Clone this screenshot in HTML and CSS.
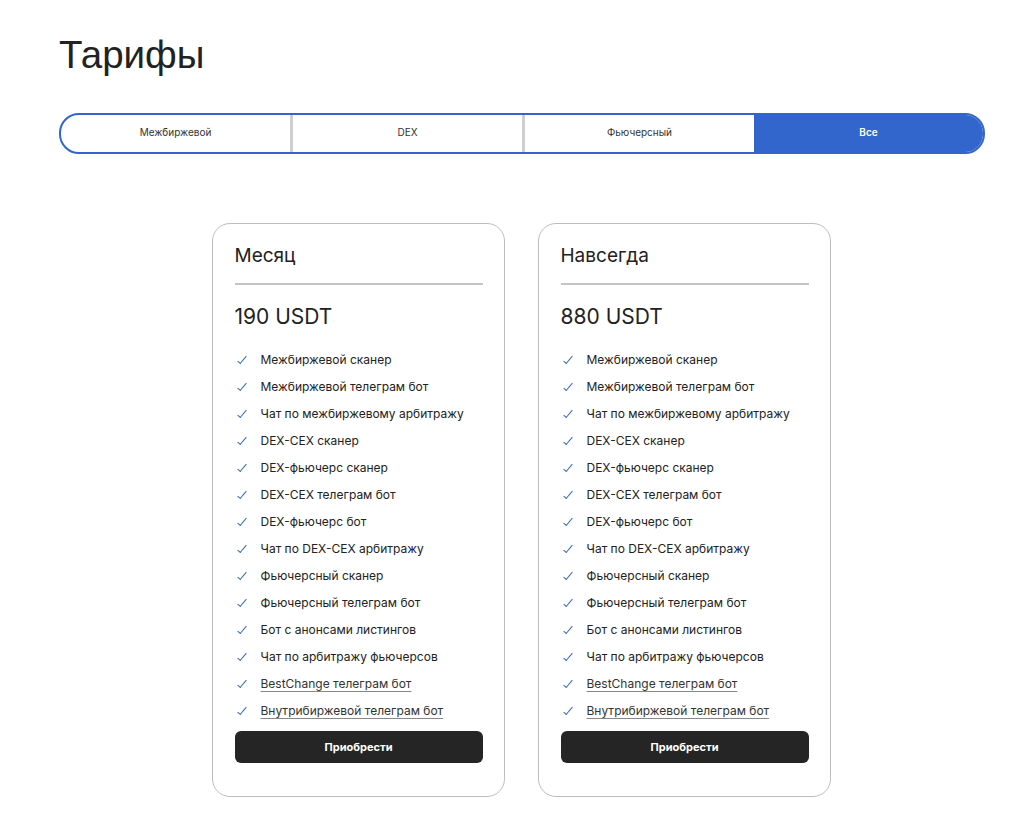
FILE: index.html
```html
<!DOCTYPE html>
<html lang="ru">
<head>
  <meta charset="UTF-8">
  <meta name="viewport" content="width=device-width, initial-scale=1.0">
  <title>Тарифы</title>
  <link rel="stylesheet" href="styles.css">
</head>
<body>
  <div class="page">
    <h1 class="page-title">Тарифы</h1>

    <div class="tabs">
      <div class="tab">Межбиржевой</div>
      <div class="tab">DEX</div>
      <div class="tab">Фьючерсный</div>
      <div class="tab active">Все</div>
    </div>

    <div class="plans">
      <div class="plan">
        <div class="plan-name">Месяц</div>
        <div class="plan-price">190 USDT</div>
        <ul class="features">
          <li>Межбиржевой сканер</li>
          <li>Межбиржевой телеграм бот</li>
          <li>Чат по межбиржевому арбитражу</li>
          <li>DEX-CEX сканер</li>
          <li>DEX-фьючерс сканер</li>
          <li>DEX-CEX телеграм бот</li>
          <li>DEX-фьючерс бот</li>
          <li>Чат по DEX-CEX арбитражу</li>
          <li>Фьючерсный сканер</li>
          <li>Фьючерсный телеграм бот</li>
          <li>Бот с анонсами листингов</li>
          <li>Чат по арбитражу фьючерсов</li>
          <li><a href="#">BestChange телеграм бот</a></li>
          <li><a href="#">Внутрибиржевой телеграм бот</a></li>
        </ul>
        <button class="buy">Приобрести</button>
      </div>

      <div class="plan">
        <div class="plan-name">Навсегда</div>
        <div class="plan-price">880 USDT</div>
        <ul class="features">
          <li>Межбиржевой сканер</li>
          <li>Межбиржевой телеграм бот</li>
          <li>Чат по межбиржевому арбитражу</li>
          <li>DEX-CEX сканер</li>
          <li>DEX-фьючерс сканер</li>
          <li>DEX-CEX телеграм бот</li>
          <li>DEX-фьючерс бот</li>
          <li>Чат по DEX-CEX арбитражу</li>
          <li>Фьючерсный сканер</li>
          <li>Фьючерсный телеграм бот</li>
          <li>Бот с анонсами листингов</li>
          <li>Чат по арбитражу фьючерсов</li>
          <li><a href="#">BestChange телеграм бот</a></li>
          <li><a href="#">Внутрибиржевой телеграм бот</a></li>
        </ul>
        <button class="buy">Приобрести</button>
      </div>
    </div>
  </div>
</body>
</html>
```

FILE: styles.css
```css
body {
  margin: 0;
  background: #fff;
  color: #222;
  font-family: "Inter", "Liberation Sans", sans-serif;
}
.page {
  padding: 0 48px 0 59px;
}
.page-title {
  margin: 0;
  padding-top: 35px;
  height: 113px;
  box-sizing: border-box;
  font-family: "Liberation Sans", Arial, sans-serif;
  font-size: 38.5px;
  line-height: 40px;
  font-weight: 400;
  color: #222;
}
.tabs {
  display: flex;
  height: 41px;
  border: 2px solid #3366cc;
  border-radius: 20px;
  overflow: hidden;
  box-sizing: border-box;
}
.tab {
  flex: 1;
  display: flex;
  align-items: center;
  justify-content: center;
  padding-bottom: 3px;
  font-size: 10px;
  color: #333;
  border-left: 3px solid #cfcfcf;
}
.tab:first-child {
  border-left: none;
}
.tab.active {
  background: #3366cc;
  color: #fff;
  font-weight: 600;
  border-left: none;
}
.plans {
  display: flex;
  justify-content: center;
  gap: 33px;
  margin-top: 69px;
  padding-right: 2px;
}
.plan {
  width: 293px;
  box-sizing: border-box;
  border: 1.5px solid #bdbdbd;
  border-radius: 18px;
  padding: 20px 21px 33px 22px;
}
.plan-name {
  font-size: 19px;
  line-height: 24px;
  padding-bottom: 15px;
  border-bottom: 2px solid #c4c4c4;
}
.plan-price {
  font-size: 21px;
  line-height: 24px;
  margin-top: 20px;
}
.features {
  list-style: none;
  margin: 17px 0 0;
  padding: 0;
}
.features li {
  position: relative;
  padding-left: 26px;
  font-size: 12px;
  line-height: 27px;
  height: 27px;
  color: #222;
}
.features li::before {
  content: "";
  position: absolute;
  left: 5px;
  top: 8px;
  width: 3px;
  height: 9px;
  border-right: 1.5px solid #3366cc;
  border-bottom: 1.5px solid #3366cc;
  transform: rotate(40deg);
}
.features a {
  color: #333;
  text-decoration: underline;
  text-decoration-color: #888;
  text-underline-offset: 3px;
}
.buy {
  display: block;
  width: 100%;
  height: 32px;
  margin-top: 7px;
  border: none;
  border-radius: 6px;
  background: #252525;
  color: #fff;
  font-family: "Inter", "Liberation Sans", sans-serif;
  font-size: 11px;
  font-weight: 700;
  cursor: pointer;
}
```
